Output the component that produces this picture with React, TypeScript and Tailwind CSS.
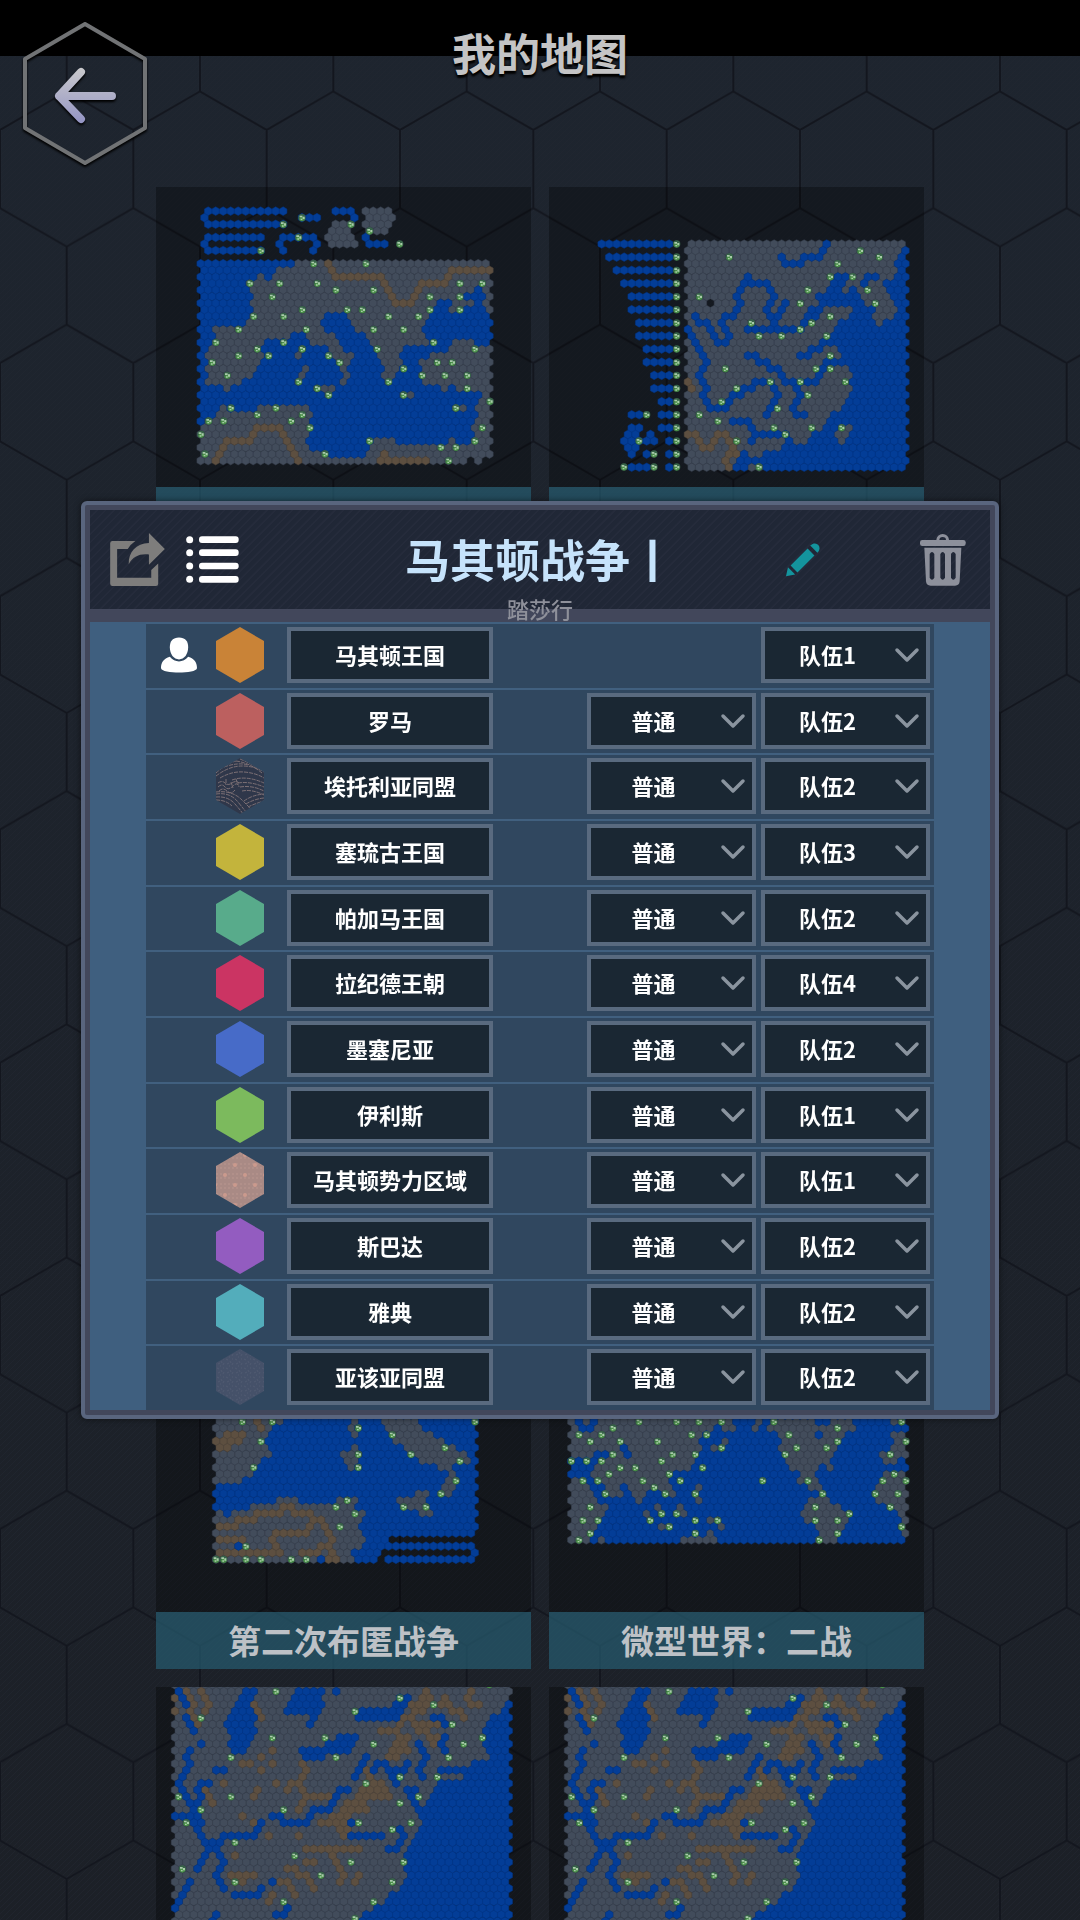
import React from "react";

type Terrain = "sea" | "land" | "hill" | "none";
type Shape = [Terrain, "area" | "line", string];

interface HexMap {
  view: string;
  x0: number;
  y0: number;
  cols: number;
  rows: number;
  shapes: Shape[];
  cities: string;
}

interface Player {
  name: string;
  color: string;
  team: number;
  human?: boolean;
}

const COL = 22.5;
const ROW = 19.7;

const FILL: Record<string, string> = { sea: "#033d97", land: "#424c5b", hill: "#5d4f40" };
const EDGE: Record<string, string> = { sea: "#033584", land: "#363f4d", hill: "#4e453a" };

const mediterranean: HexMap = {
  view: "18 21 1125 900",
  x0: 152,
  y0: 93.4,
  cols: 39,
  rows: 39,
  shapes: [
    ["land", "area", "140,245 1035,245 1035,855 140,855"],
    ["sea", "area", "140,240 435,240 435,262 380,268 375,300 345,300 335,282 318,298 295,305 308,340 308,400 290,442 235,438 190,442 190,470 175,510 172,560 180,590 165,605 215,618 232,635 250,615 275,610 310,590 330,545 345,480 400,480 425,460 455,460 475,480 480,500 520,500 540,520 560,540 575,575 575,610 600,610 595,565 610,540 630,570 640,560 620,525 600,520 580,520 550,465 525,460 515,430 515,400 570,400 600,420 625,460 660,485 690,530 700,560 690,590 715,620 735,590 740,560 760,545 755,520 775,500 830,500 880,500 900,500 870,515 830,525 810,550 805,590 830,610 870,620 885,635 910,620 940,640 960,625 990,640 980,690 985,720 950,790 895,780 870,795 745,795 730,780 665,780 645,835 560,835 520,820 470,800 480,760 485,700 470,680 330,680 310,695 245,695 235,665 220,670 200,700 160,735 140,735"],
    ["sea", "area", "880,360 905,360 900,395 935,398 940,382 970,380 975,360 940,355 960,340 985,320 1000,335 1005,370 1030,420 1030,495 985,500 960,480 910,480 870,510 830,480 820,430 850,390"],
    ["land", "line", "457,507 446,527"],
    ["land", "line", "468,566 446,605"],
    ["land", "line", "502,625 547,625 536,645"],
    ["land", "line", "761,645 784,645"],
    ["land", "line", "918,684 941,684"],
    ["hill", "line", "535,245 553,290 698,290 743,370 790,370 815,310 890,310 905,271 1020,271"],
    ["hill", "line", "195,842 230,783 300,783 320,743 395,743 450,842"],
    ["hill", "line", "685,842 835,842"],
    ["hill", "line", "705,822 705,842"],
    ["none", "line", "963,842 966,842"],
    ["none", "line", "1008,842 1030,842"],
    ["sea", "line", "405,94 175,94 163,113 175,133 400,133"],
    ["sea", "line", "340,172 175,172 163,192 175,212 333,212"],
    ["sea", "line", "456,113 505,113"],
    ["sea", "line", "400,212 390,192 400,172 490,172 502,192 490,212"],
    ["sea", "line", "558,94 603,94 613,113 603,133"],
    ["sea", "line", "648,172 658,192 705,192"],
    ["land", "area", "550,125 600,125 625,205 530,205 525,160"],
    ["land", "area", "640,85 735,85 735,120 715,160 650,160"],
  ],
  cities:
    "456,113 400,133 446,172 333,212 603,133 659,153 749,192 491,251 648,251 300,310 389,310 502,310 558,330 671,330 367,350 457,389 592,389 637,389 401,409 311,409 716,409 806,409 840,350 840,389 930,310 930,350 930,389 997,310 266,448 469,448 671,448 761,448 198,487 401,487 851,487 322,507 457,507 682,507 975,507 266,527 356,527 536,527 187,547 569,547 862,547 907,547 761,566 232,586 817,586 885,586 952,586 446,605 716,605 502,625 952,625 536,645 761,645 1020,664 243,684 378,684 918,684 322,704 457,704 176,723 221,723 424,723 480,743 997,743 153,763 659,783 975,783 873,802 918,802 165,822 525,822 896,842",
};

const eastAsia: HexMap = {
  view: "27 21 1125 900",
  x0: 185,
  y0: 192,
  cols: 41,
  rows: 35,
  shapes: [
    ["land", "area", "438,180 1110,180 1110,875 438,875"],
    ["sea", "area", "1090,200 1110,200 1110,875 580,875 600,820 655,825 725,800 730,780 800,790 825,755 850,750 870,705 910,680 935,640 930,570 900,550 905,510 870,490 890,430 930,415 940,380 870,380 830,400 790,450 740,455 770,430 810,385 830,370 835,345 860,335 880,290 925,290 905,340 930,335 960,300 960,350 965,375 995,380 1015,440 1060,410 1070,380 1030,310 1060,300 1070,260 1080,230"],
    ["sea", "line", "862,192 845,231 790,235 770,251 735,251 722,231"],
    ["sea", "line", "460,409 490,429 510,440 530,487 560,487 568,460 545,429 550,410 580,409 600,360 600,330 622,290 635,310 680,310 705,350 690,389 690,409 710,409 735,370"],
    ["sea", "line", "620,448 770,448 820,400"],
    ["sea", "line", "690,409 700,448"],
    ["sea", "line", "440,448 470,500 495,547 480,586 510,685 560,685 590,645 630,625 650,605 700,605 715,660 690,700"],
    ["sea", "line", "620,527 650,527 680,550 720,575 730,610 775,605 770,665 755,685 780,704 800,704"],
    ["sea", "line", "730,605 820,605 850,560 870,547 920,547"],
    ["sea", "line", "780,527 820,515 860,490"],
    ["sea", "line", "575,723 610,723 640,760 640,783"],
    ["sea", "line", "640,763 740,763"],
    ["sea", "line", "975,300 1010,290"],
    ["hill", "line", "440,763 470,763 490,802 515,802 525,770 560,763 580,783 580,822 560,842 568,861"],
    ["hill", "line", "440,605 455,625"],
    ["land", "area", "885,733 940,733 930,760 905,795 885,765"],
    ["land", "line", "632,861 659,861"],
    ["none", "line", "511,370 511,370"],
    ["sea", "line", "185,192 388,192"],
    ["sea", "line", "207,231 388,231"],
    ["sea", "line", "230,271 388,271"],
    ["sea", "line", "252,310 388,310"],
    ["sea", "line", "275,350 388,350"],
    ["sea", "line", "275,389 388,389"],
    ["sea", "line", "297,429 388,429"],
    ["sea", "line", "297,468 388,468"],
    ["sea", "line", "320,507 388,507"],
    ["sea", "line", "320,547 388,547"],
    ["sea", "line", "342,586 388,586"],
    ["sea", "line", "342,625 388,625"],
    ["sea", "line", "365,665 388,665"],
    ["sea", "line", "365,704 388,704"],
    ["sea", "line", "365,743 388,743"],
    ["sea", "line", "387,783 388,783"],
    ["sea", "line", "387,822 388,822"],
    ["sea", "line", "387,861 388,861"],
    ["sea", "line", "275,704 300,704"],
    ["sea", "area", "262,735 308,735 305,765 295,810 275,835 250,805 240,780"],
    ["sea", "line", "331,763 320,783 342,783"],
    ["sea", "line", "320,822 322,822"],
    ["sea", "line", "275,861 320,861"],
  ],
  cities:
    "410,192 410,231 410,271 410,310 410,350 410,389 410,429 410,468 410,507 410,547 410,586 410,625 410,665 410,704 410,743 410,783 410,822 410,861 568,231 961,212 1018,231 893,251 871,290 938,290 983,330 1006,370 804,330 781,370 478,350 634,429 815,429 871,409 781,448 657,468 725,468 860,468 556,566 828,566 871,566 871,527 691,605 781,605 916,605 590,625 804,645 545,665 713,685 478,704 534,723 702,743 815,743 905,743 736,763 590,783 657,861 320,704 297,783 342,822 252,861 342,861",
};

const punicWar: HexMap = {
  view: "18 -84 1125 900",
  x0: 198,
  y0: 224.6,
  cols: 35,
  rows: 23,
  shapes: [
    ["sea", "area", "187,220 990,220 990,668 187,668"],
    ["land", "area", "187,220 395,220 395,250 370,265 350,300 365,340 350,355 310,390 285,425 187,432"],
    ["hill", "area", "195,295 230,280 290,280 265,308 235,330 200,330"],
    ["hill", "line", "322,245 335,265"],
    ["land", "line", "613,245 603,264 613,284"],
    ["land", "line", "613,325 580,345 605,365 613,385"],
    ["land", "line", "603,345 625,345"],
    ["land", "area", "695,220 805,235 820,270 860,290 890,305 950,345 965,368 910,370 928,422 905,470 865,465 890,420 890,390 840,380 770,340 730,300 705,270"],
    ["land", "area", "740,475 800,460 835,453 835,490 850,525 812,525 800,508 745,508"],
    ["land", "area", "187,525 210,510 240,525 290,500 380,490 385,472 440,472 450,488 550,488 580,472 620,478 620,508 645,518 630,545 645,600 610,635 615,668 530,668 520,645 480,668 187,668"],
    ["sea", "line", "266,619 268,619"],
    ["hill", "line", "200,560 260,560 268,540 310,540 320,520 390,520 405,497 430,500 440,520 480,530 490,560 460,580 375,580 370,600 375,619"],
    ["hill", "line", "480,540 520,545 530,580 555,605 510,617 500,639 450,645"],
    ["hill", "line", "200,600 280,600"],
    ["hill", "line", "200,639 390,639"],
    ["hill", "line", "545,619 540,658 565,658"],
    ["none", "line", "720,600 990,600"],
    ["none", "line", "700,639 955,639"],
    ["none", "line", "690,658 692,658"],
  ],
  cities:
    "277,245 367,245 975,245 625,264 727,284 333,304 885,323 625,343 783,343 930,363 311,382 625,382 918,422 873,461 592,481 558,501 761,501 828,501 615,521 570,560 288,619 198,658 221,658 288,658 333,658 424,658 469,658",
};

const microWorld: HexMap = {
  view: "27 -84 1125 900",
  x0: 94,
  y0: 205.8,
  cols: 45,
  rows: 21,
  shapes: [
    ["sea", "area", "84,200 1110,200 1110,610 84,610"],
    ["land", "area", "84,200 570,200 590,265 560,270 540,260 490,275 485,320 470,360 440,390 395,390 385,420 405,460 395,485 375,470 350,445 325,450 300,495 285,470 265,430 230,420 248,468 195,468 180,430 162,420 160,385 170,370 205,335 165,345 150,360 140,345 84,345"],
    ["sea", "line", "118,250 129,264 151,264 155,245"],
    ["sea", "line", "250,323 264,345"],
    ["land", "area", "84,410 130,412 155,440 175,490 208,495 195,520 185,550 150,590 130,610 84,610"],
    ["land", "line", "556,304 545,323 522,323"],
    ["land", "line", "480,442 465,461 478,481"],
    ["land", "line", "345,495 355,501 365,521"],
    ["land", "line", "320,521 331,541"],
    ["land", "line", "365,560 388,560"],
    ["land", "line", "420,501 410,521 435,521"],
    ["land", "line", "510,541 533,541 545,560"],
    ["land", "line", "430,600 525,600 510,580"],
    ["land", "line", "184,600 186,600"],
    ["land", "line", "646,264 660,245"],
    ["land", "area", "675,235 915,235 950,260 905,290 895,310 880,340 875,390 855,370 830,390 820,415 850,440 840,460 780,430 780,400 750,385 730,340 715,320 715,290 685,260"],
    ["sea", "line", "835,245 858,245"],
    ["sea", "line", "836,284 840,284"],
    ["land", "line", "826,442 848,461 850,481"],
    ["land", "area", "825,475 870,472 895,498 940,518 920,560 895,605 830,610 830,560 782,530 795,490"],
    ["land", "area", "1060,275 1107,290 1110,350 1060,372 1030,370 1018,345 1055,320"],
    ["land", "line", "1063,245 1085,245"],
    ["land", "area", "1040,398 1110,392 1110,530 1075,525 1070,505 1040,510 1000,480 1010,440"],
    ["land", "line", "1085,541 1085,560 1098,580"],
  ],
  cities:
    "297,245 410,245 477,245 545,245 702,245 1085,245 219,264 893,264 117,284 185,284 455,284 500,284 747,284 151,304 241,304 353,304 893,304 1098,304 545,323 770,323 860,323 219,343 398,343 466,343 736,343 1051,343 94,363 140,363 185,363 365,363 241,383 286,383 488,383 207,402 388,402 1063,402 129,422 174,422 309,422 421,422 668,422 804,422 1029,422 1098,422 343,442 196,461 376,461 466,461 848,461 1006,461 1074,461 151,501 826,501 1051,501 365,521 410,521 928,521 129,541 174,541 331,541 466,541 533,541 826,541 893,541 388,560 1085,560 151,580 466,580 893,580 117,600 838,600",
};

const coast: HexMap = {
  view: "18 51 1125 900",
  x0: 75,
  y0: 44.5,
  cols: 45,
  rows: 46,
  shapes: [
    ["land", "area", "63,40 1090,40 1090,960 63,960"],
    ["sea", "area", "1070,100 1090,90 1090,960 500,960 620,750 680,715 710,680 750,650 770,600 770,575 765,540 790,510 800,470 825,430 815,405 840,380 870,320 865,290 960,290 975,272 1020,262 1000,230 1000,190 1020,140 1060,120"],
    ["land", "line", "870,321 935,321"],
    ["sea", "area", "275,50 325,50 305,100 325,180 285,252 240,252 235,215 225,155 255,110"],
    ["sea", "area", "430,50 528,50 510,125 490,170 470,170 490,125 425,125 400,135 420,90"],
    ["sea", "line", "558,64 560,64"],
    ["sea", "area", "618,115 735,112 745,85 785,72 760,140 740,155 620,155"],
    ["sea", "area", "560,193 628,193 605,248 525,252 515,272 452,272 445,232 510,230"],
    ["sea", "line", "75,64 100,84 120,144 130,183"],
    ["sea", "line", "153,222 120,242 110,280 95,320 90,350 110,380 125,410 150,380 145,350 180,340"],
    ["sea", "line", "75,439 130,439 150,470 165,510 200,540 220,580 200,610 220,655"],
    ["sea", "line", "145,600 170,545"],
    ["sea", "line", "200,540 215,498 320,498 333,460"],
    ["sea", "line", "250,675 325,675 333,655"],
    ["sea", "line", "190,301 225,301"],
    ["sea", "line", "120,636 95,680 75,715"],
    ["sea", "line", "365,439 410,458 475,458 490,430 540,405 560,370 600,360"],
    ["sea", "line", "603,458 592,490 620,498 700,498"],
    ["sea", "line", "645,262 610,320"],
    ["sea", "line", "665,300 700,285 735,310 740,340 740,310 770,290"],
    ["sea", "line", "810,222 828,260 805,290 818,320"],
    ["sea", "line", "880,203 880,242"],
    ["sea", "line", "850,144 885,155"],
    ["sea", "line", "775,360 800,360 790,390 812,440"],
    ["sea", "line", "745,480 765,500 745,537 710,540"],
    ["sea", "line", "366,636 368,636"],
    ["sea", "line", "195,735 195,755"],
    ["sea", "line", "415,715 370,740"],
    ["hill", "line", "100,60 125,100 140,160"],
    ["hill", "line", "153,70 175,100 160,130"],
    ["hill", "line", "75,90 75,120"],
    ["hill", "line", "315,104 333,150"],
    ["hill", "line", "275,281 300,281"],
    ["hill", "line", "333,262 333,262"],
    ["hill", "line", "333,301 333,301"],
    ["hill", "line", "366,242 366,242"],
    ["hill", "line", "366,281 366,281"],
    ["hill", "line", "378,340 378,340"],
    ["hill", "line", "221,340 221,340"],
    ["hill", "line", "322,360 310,380"],
    ["hill", "line", "165,360 187,400"],
    ["hill", "line", "460,285 468,310 420,345 410,360"],
    ["hill", "line", "440,340 468,390 445,419"],
    ["hill", "line", "460,380 535,380"],
    ["hill", "area", "738,197 785,197 775,240 740,268 700,268 735,225"],
    ["hill", "area", "645,300 665,300 730,385 660,385 650,425 605,430 600,455 595,510 565,510 560,465 505,465 520,440 565,430 560,400 620,395 630,350"],
    ["hill", "line", "690,183 720,183 760,155 800,120 830,64"],
    ["hill", "area", "785,92 850,75 835,130 775,125"],
    ["hill", "line", "795,163 860,163"],
    ["hill", "line", "815,183 855,203 850,222"],
    ["hill", "line", "885,84 880,104 930,124 940,155"],
    ["hill", "line", "965,64 960,90 985,104"],
    ["hill", "line", "355,498 355,498"],
    ["hill", "line", "445,498 445,498"],
    ["hill", "line", "276,439 276,439"],
    ["hill", "line", "310,458 310,458"],
    ["hill", "line", "470,545 560,540 630,537"],
    ["hill", "line", "465,576 490,576"],
    ["hill", "line", "545,560 580,600 570,640"],
    ["hill", "line", "615,636 625,615"],
    ["hill", "line", "410,597 440,597 490,655"],
    ["hill", "line", "385,636 420,640 435,680"],
    ["hill", "line", "355,695 368,675"],
    ["hill", "line", "250,557 260,557"],
    ["hill", "line", "245,616 315,616"],
    ["hill", "line", "265,636 280,636"],
  ],
  cities:
    "378,64 1018,44 750,84 851,104 615,124 153,144 907,163 367,203 525,203 997,203 671,222 941,222 243,262 558,262 896,262 750,321 862,321 648,340 86,380 243,380 806,380 750,399 153,419 401,419 109,458 626,458 783,458 727,478 255,517 434,557 603,576 761,576 97,597 513,616 255,636 727,636 401,695 671,695 615,745",
};

const maps: { title: string; map?: HexMap }[] = [
  { title: "", map: mediterranean },
  { title: "", map: eastAsia },
  { title: "" },
  { title: "" },
  { title: "" },
  { title: "" },
  { title: "第二次布匿战争", map: punicWar },
  { title: "微型世界：二战", map: microWorld },
  { title: "", map: coast },
  { title: "", map: coast },
];

const players: Player[] = [
  { name: "马其顿王国", color: "#c98337", team: 1, human: true },
  { name: "罗马", color: "#bc605f", team: 2 },
  { name: "埃托利亚同盟", color: "url(#waves)", team: 2 },
  { name: "塞琉古王国", color: "#c3b43c", team: 3 },
  { name: "帕加马王国", color: "#58ab8b", team: 2 },
  { name: "拉纪德王朝", color: "#cb3463", team: 4 },
  { name: "墨塞尼亚", color: "#476bc8", team: 2 },
  { name: "伊利斯", color: "#7cba5d", team: 1 },
  { name: "马其顿势力区域", color: "url(#petals)", team: 1 },
  { name: "斯巴达", color: "#935cc0", team: 2 },
  { name: "雅典", color: "#53adbb", team: 2 },
  { name: "亚该亚同盟", color: "url(#specks)", team: 2 },
];

const parse = (s: string) => s.split(" ").map((p) => p.split(",").map(Number));

function insideArea(x: number, y: number, pts: number[][]) {
  let inside = false;
  for (let i = 0, j = pts.length - 1; i < pts.length; j = i++) {
    const [xi, yi] = pts[i];
    const [xj, yj] = pts[j];
    if (yi > y !== yj > y && x < ((xj - xi) * (y - yi)) / (yj - yi) + xi) inside = !inside;
  }
  return inside;
}

function nearLine(x: number, y: number, pts: number[][]) {
  for (let i = 1; i < pts.length; i++) {
    const [ax, ay] = pts[i - 1];
    const dx = pts[i][0] - ax;
    const dy = pts[i][1] - ay;
    const len = dx * dx + dy * dy;
    const t = len ? Math.max(0, Math.min(1, ((x - ax) * dx + (y - ay) * dy) / len)) : 0;
    if (Math.hypot(x - ax - t * dx, y - ay - t * dy) < 11) return true;
  }
  return false;
}

// One path per terrain keeps the DOM small
function buildPaths(map: HexMap) {
  const shapes = map.shapes.map(([terrain, kind, pts]) => ({ terrain, kind, pts: parse(pts) }));
  const paths: Record<string, string> = { land: "", hill: "", sea: "" };
  for (let r = 0; r < map.rows; r++) {
    for (let c = 0; c < map.cols; c++) {
      const x = map.x0 + c * COL + (r % 2) * (COL / 2);
      const y = map.y0 + r * ROW;
      let terrain: Terrain = "none";
      for (const s of shapes) {
        if (s.kind === "area" ? insideArea(x, y, s.pts) : nearLine(x, y, s.pts)) terrain = s.terrain;
      }
      if (terrain !== "none") {
        paths[terrain] += `M${x.toFixed(1)} ${(y - 13).toFixed(1)}l11.300 6.500v13l-11.300 6.500l-11.300-6.500v-13z`;
      }
    }
  }
  return paths;
}

function MapPreview({ map }: { map: HexMap }) {
  const paths = buildPaths(map);
  return (
    <svg viewBox={map.view} className="block h-full w-full" aria-hidden="true">
      {Object.keys(paths).map((t) => (
        <path key={t} d={paths[t]} fill={FILL[t]} stroke={EDGE[t]} strokeWidth="1.5" />
      ))}
      {parse(map.cities).map(([x, y], i) => (
        <g key={i} transform={`translate(${x} ${y})`}>
          <circle r="11" fill="#376348" />
          <path d="M-9 4a9.500 9.500 0 0 0 18 0l-4-6h-9z" fill="#4b9148" />
          <path d="M-7-6h8v5h-8zM2-3h6v7h-6zM-4 3h5v4h-5z" fill="#a8cba9" />
        </g>
      ))}
    </svg>
  );
}

function Backdrop() {
  return (
    <svg className="absolute inset-0 -z-10 h-full w-full" aria-hidden="true">
      <defs>
        <pattern id="comb" x="0" y="130" width={400 / 3} height="233.2" patternUnits="userSpaceOnUse">
          <path
            d="M0 0V78L66.670 116.600V194.600L0 233.200M66.670 116.600L133.330 78V0M66.670 194.600L133.330 233.200"
            fill="none"
            stroke="#13161e"
            strokeWidth="2"
          />
        </pattern>
        <pattern id="hatch" width="6" height="6" patternUnits="userSpaceOnUse">
          <path d="M-1 1l2-2M0 6l6-6M5 7l2-2" stroke="#222731" strokeWidth="1" />
        </pattern>
        <linearGradient id="dusk" x2="0" y2="1">
          <stop offset="0" stopColor="#1e252f" />
          <stop offset="1" stopColor="#1c2027" />
        </linearGradient>
      </defs>
      <rect width="100%" height="100%" fill="url(#dusk)" />
      <rect width="100%" height="100%" fill="url(#hatch)" opacity="0.6" />
      <rect width="100%" height="100%" fill="url(#comb)" />
    </svg>
  );
}

function BackIcon() {
  return (
    <svg viewBox="20 20 130 150" className="h-[150px] w-[130px] drop-shadow-[0_2px_1px_#000]">
      <defs>
        <linearGradient id="steel" gradientUnits="userSpaceOnUse" x1="0" y1="66" x2="0" y2="124">
          <stop offset="0" stopColor="#cbcbcc" />
          <stop offset="1" stopColor="#9394c4" />
        </linearGradient>
      </defs>
      <path
        d="M85 24L145 59V128L85 163L25 128V59Z"
        fill="none"
        stroke="#717375"
        strokeWidth="4"
        strokeLinejoin="round"
      />
      <path
        d="M81 72L59 96L81 119M59 96H112"
        fill="none"
        stroke="url(#steel)"
        strokeWidth="8"
        strokeLinecap="round"
        strokeLinejoin="round"
      />
    </svg>
  );
}

function ShareIcon() {
  return (
    <svg viewBox="119 122 165 160" className="h-[53px] w-[55px]" fill="#7e7d7c">
      <path d="M195 146H126q-7 0-7 7V275q0 7 7 7H257q7 0 7-7V214l-21 20V257H140V170H172Q180 156 195 146Z" />
      <path d="M236 122L284 170L236 218V187C206 184 188 194 175 216C174 178 197 154 236 152Z" />
    </svg>
  );
}

function ListIcon() {
  return (
    <svg viewBox="347 141 159 141" className="h-[47px] w-[53px]" fill="#fff">
      {[152, 191, 231, 271].map((y) => (
        <g key={y}>
          <circle cx="358" cy={y} r="10.500" />
          <rect x="386" y={y - 10} width="119" height="20" rx="9" />
        </g>
      ))}
    </svg>
  );
}

function PencilIcon() {
  return (
    <svg viewBox="737 160 104 104" className="h-[34px] w-[34px]" fill="#14949d">
      <path d="M737 262L743 234L765 256Z" />
      <path d="M751 229L803 177L824 198L772 250Z" />
      <path d="M811 168C822 158 833 161 838 169C841 176 839 184 833 190Z" />
    </svg>
  );
}

function TrashIcon() {
  return (
    <svg viewBox="1141 134 138 156" className="h-[52px] w-[46px]" fill="#8d909b">
      <path d="M1190 152A19 18 0 0 1 1228 152H1219A10 9 0 0 0 1199 152Z" />
      <rect x="1141" y="152" width="137" height="18" rx="7" />
      <path
        fillRule="evenodd"
        d="M1154 175H1265L1260 276Q1259 289 1246 289H1173Q1160 289 1159 276ZM1170 194V265Q1177 277 1184 265V194Q1177 182 1170 194ZM1202 194V265Q1209 277 1216 265V194Q1209 182 1202 194ZM1234 194V265Q1241 277 1248 265V194Q1241 182 1234 194Z"
      />
    </svg>
  );
}

function PersonIcon() {
  return (
    <svg viewBox="272 443 110 107" className="h-9 w-9" fill="#fff">
      <path d="M327 443C346 443 355 454 355 473C355 494 343 510 327 510C311 510 299 494 299 473C299 454 308 443 327 443Z" />
      <path d="M299 502C314 521 340 521 355 502C374 508 382 520 382 536C382 546 352 550 327 550C302 550 272 546 272 536C272 520 280 508 299 502Z" />
    </svg>
  );
}

// Textures used by the nations that have no flat colour
function SwatchPatterns() {
  return (
    <svg className="absolute h-0 w-0" aria-hidden="true">
      <defs>
        <pattern id="waves" width="48" height="56" patternUnits="userSpaceOnUse">
          <rect width="48" height="56" fill="#2f374a" />
          <path
            d="M0 15q11-10 20-12M0 18q13-10 26-10t22 6M4 20q12-7 24-6t20 6M16 22q14-5 32 3M22 25q12-2 26 4M24 29q12-2 24 4M26 33q10-2 22 4M20 3q14 2 26 12M24 1q10 4 20 10M8 9q14-5 24-2M2 25q4-3 7 0t7 0 7 0M2 29q4-4 7 0t8-1 6 1M3 33q4-4 8 0t8-1M0 36q14-2 22 8t10 12M0 39q12-1 19 7t8 10M0 42q10 0 16 6M0 34q16-2 26 8t10 10M28 43q8-6 20-7M30 46q8-5 18-6M32 49q6-3 16-6M10 21v6M15 24l2 6M20 21l2 6"
            fill="none"
            stroke="#7b6f74"
            strokeWidth="1"
            strokeDasharray="4 1"
          />
        </pattern>
        <pattern id="petals" width="20" height="20" patternUnits="userSpaceOnUse" x="4" y="-2">
          <rect width="20" height="20" fill="#a98a85" />
          <path d="M0 4h20M0 8h20M0 14h20M0 18h20" stroke="#b99790" strokeWidth="1" strokeDasharray="2 2" />
          <circle cx="5" cy="5" r="2" fill="#cb9a8d" />
          <circle cx="15" cy="15" r="2" fill="#cb9a8d" />
        </pattern>
        <pattern id="specks" width="9" height="9" patternUnits="userSpaceOnUse">
          <rect width="9" height="9" fill="#455169" />
          <path d="M1 1l2 1M5 3l1 2M2 6l2-1M7 7l1-2M7 1h1M4 8h1" stroke="#505a71" strokeWidth="1" />
        </pattern>
      </defs>
    </svg>
  );
}

function Dropdown({ label, value, options }: { label: string; value: string; options: string[] }) {
  return (
    <div className="relative w-[169px]">
      <select
        aria-label={label}
        defaultValue={value}
        className="block h-14 w-full appearance-none border-4 border-[#596a7f] bg-[#1a2733] pr-9 pb-0.5 text-[22px] leading-8 font-bold text-white [text-align-last:center]"
      >
        {options.map((o) => (
          <option key={o}>{o}</option>
        ))}
      </select>
      <svg viewBox="0 0 26 16" className="pointer-events-none absolute top-5 right-2.5 h-4 w-[26px]">
        <path
          d="M3 3L13 13L23 3"
          fill="none"
          stroke="#8a949f"
          strokeWidth="3.5"
          strokeLinecap="round"
          strokeLinejoin="round"
        />
      </svg>
    </div>
  );
}

function PlayerRow({ player }: { player: Player }) {
  return (
    <li className="flex flex-1 items-center border-t-2 border-[#41607f] bg-[#30475f] pr-1 pb-0.5 pl-[15px]">
      <div className="w-9">{player.human && <PersonIcon />}</div>
      <svg viewBox="0 0 48 56" className="mr-[23px] ml-[19px] h-14 w-12">
        <path d="M24 0L48 14V42L24 56L0 42V14Z" fill={player.color} />
      </svg>
      <input
        aria-label={player.name}
        defaultValue={player.name}
        className="block h-14 w-[206px] border-4 border-[#596a7f] bg-[#1a2733] pb-0.5 text-center text-[22px] font-bold text-white"
      />
      <div className="ml-auto flex gap-[5px]">
        {!player.human && <Dropdown label={`${player.name} 普通`} value="普通" options={["普通"]} />}
        <Dropdown
          label={`${player.name} 队伍`}
          value={`队伍${player.team}`}
          options={["队伍1", "队伍2", "队伍3", "队伍4"]}
        />
      </div>
    </li>
  );
}

function MapDialog() {
  return (
    <div className="fixed inset-0 flex items-center justify-center">
      <section
        role="dialog"
        aria-labelledby="map-name"
        className="w-full max-w-[918px] rounded-md border-4 border-[#59657e] bg-[#42475b] p-[5px] shadow-[0_0_6px_#0008]"
      >
        <header className="bg-[repeating-linear-gradient(135deg,#202736_0px,#202736_4px,#252b3b_5px,#252b3b_6px)] bg-[length:100%_99px] bg-no-repeat">
          <div className="grid h-[87px] grid-cols-[1fr_auto_1fr] items-center pt-3">
            <div className="flex items-center gap-[21px] pl-5">
              <button aria-label="分享">
                <ShareIcon />
              </button>
              <button aria-label="列表">
                <ListIcon />
              </button>
            </div>
            <h2 id="map-name" className="pb-0.5 text-[45px] leading-[60px] font-bold text-[#c6e3fb]">
              马其顿战争丨
            </h2>
            <div className="flex items-center justify-between pr-6 pl-[111px]">
              <button aria-label="编辑">
                <PencilIcon />
              </button>
              <button aria-label="删除">
                <TrashIcon />
              </button>
            </div>
          </div>
          <p className="-mt-px pb-0.5 text-center text-[22px] leading-6 font-medium text-[#8e909a]">踏莎行</p>
        </header>
        <ul className="flex h-[788px] flex-col bg-[#3f5f7f] px-14">
          {players.map((p) => (
            <PlayerRow key={p.name} player={p} />
          ))}
        </ul>
      </section>
    </div>
  );
}

export default function App() {
  return (
    <main className="relative isolate h-screen overflow-hidden bg-[#1d222c] font-['Noto_Sans_CJK_SC',sans-serif]">
      <Backdrop />
      <SwatchPatterns />
      <header className="grid h-[187px] grid-cols-[1fr_auto_1fr] items-start bg-[linear-gradient(#000,#000)] bg-[length:100%_56px] bg-no-repeat px-5 pt-5">
        <button aria-label="返回" className="justify-self-start">
          <BackIcon />
        </button>
        <h1 className="mt-1 text-[44px] leading-[56px] font-bold text-[#c4c4c5] [text-shadow:0_3px_2px_#000,0_0_3px_#000]">
          我的地图
        </h1>
      </header>
      <div className="mx-auto grid max-w-[768px] grid-cols-2 gap-[18px]">
        {maps.map(({ title, map }, i) => (
          <article key={i}>
            <div className="h-[300px] bg-black/30">{map && <MapPreview map={map} />}</div>
            <h3 className="h-[57px] bg-[#265d70]/70 text-center text-[33px] leading-[56px] font-bold text-[#bdc1c6]">
              {title}
            </h3>
          </article>
        ))}
      </div>
      <MapDialog />
    </main>
  );
}
